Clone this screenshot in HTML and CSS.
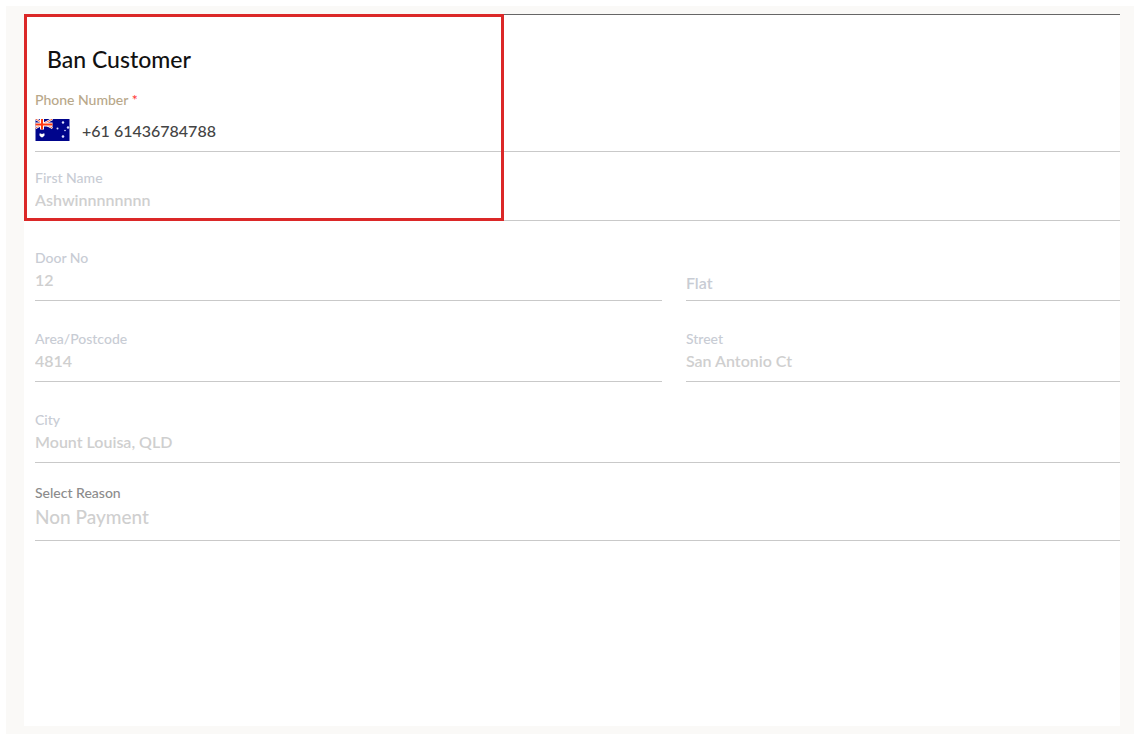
FILE: index.html
```
<!DOCTYPE html>
<html lang="en">
<head>
  <meta charset="UTF-8">
  <title>Ban Customer</title>
  <meta name="viewport" content="width=device-width, initial-scale=1.0">
  <link rel="stylesheet" href="styles.css">
</head>
<body>
  <main class="page">
    <form class="card">
      <section class="customer">
        <h1>Ban Customer</h1>

        <div class="field phone">
          <label for="phone">Phone Number <span class="required">*</span></label>
          <div class="phone-row">
            <svg class="flag" viewBox="0 0 34 22" aria-hidden="true">
              <rect width="34" height="22" fill="#00058c"/>
              <path d="M0 0L17 9M17 0L0 9" stroke="#fff" stroke-width="2.4"/>
              <path d="M0 0L17 9M17 0L0 9" stroke="#f0441e" stroke-width="0.8"/>
              <path d="M6.5 0V10.500M0 5.5H17" stroke="#fff" stroke-width="4"/>
              <path d="M6.5 0V10.500M0 5.5H17" stroke="#ff3a12" stroke-width="2"/>
              <path d="M4 14.500h1.500l1 .7 1-.7H9v2l-1.500 1.500-1 .5-1-.5L4 16.500z" fill="#fff"/>
              <g fill="#dfe4ff">
                <circle cx="27.500" cy="3.500" r="1.200"/>
                <circle cx="22" cy="9.500" r="1"/>
                <circle cx="32.500" cy="8.500" r="1.200"/>
                <circle cx="29.500" cy="11.500" r="0.800"/>
                <circle cx="27.500" cy="17.500" r="1.300"/>
              </g>
            </svg>
            <input type="tel" id="phone" value="+61 61436784788">
          </div>
        </div>

        <div class="field">
          <label for="first-name">First Name</label>
          <input type="text" id="first-name" value="Ashwinnnnnnnn" disabled>
        </div>

        <div class="highlight"></div>
      </section>

      <section class="address">
        <div class="field">
          <label for="door">Door No</label>
          <input type="text" id="door" value="12" disabled>
        </div>
        <div class="field empty">
          <input type="text" id="flat" placeholder="Flat" aria-label="Flat" disabled>
        </div>
        <div class="field">
          <label for="area">Area/Postcode</label>
          <input type="text" id="area" value="4814" disabled>
        </div>
        <div class="field">
          <label for="street">Street</label>
          <input type="text" id="street" value="San Antonio Ct" disabled>
        </div>
        <div class="field wide">
          <label for="city">City</label>
          <input type="text" id="city" value="Mount Louisa, QLD" disabled>
        </div>
      </section>

      <div class="field reason">
        <label for="reason">Select Reason</label>
        <select id="reason" disabled>
          <option>Non Payment</option>
        </select>
      </div>
    </form>
  </main>
</body>
</html>
```
FILE: styles.css
```
* {
  box-sizing: border-box;
}

body {
  margin: 0;
  padding: 6px 6px 7px;
  min-height: 100vh;
  display: flex;
  background: #fff;
  font-family: Lato, sans-serif;
}

.page {
  flex: 1;
  display: flex;
  padding: 8px 14px 8px 18px;
  background: #faf9f7;
}

.card {
  flex: 1;
  background: #fff;
  border-top: 1px solid #666;
}

.customer {
  position: relative;
  padding-left: 11px;
}

h1 {
  margin: 0;
  padding: 28px 12px 16px;
  font-size: 23px;
  line-height: 32px;
  font-weight: 500;
  color: #111;
}

.field {
  display: flex;
  flex-direction: column;
  padding-bottom: 9px;
  border-bottom: 1px solid #c9c9c9;
}

.field label {
  font-size: 14px;
  line-height: 18px;
  font-weight: 500;
  color: #c8ccd4;
}

.field input,
.field select {
  width: 100%;
  height: 24px;
  margin: 0;
  padding: 0;
  border: none;
  outline: none;
  background: none;
  font-family: inherit;
  font-size: 16px;
  font-weight: 600;
  color: #cfcfcf;
  opacity: 1;
}

.field input::placeholder {
  color: #c8ccd4;
  opacity: 1;
}

.phone {
  margin-bottom: 17px;
}

.field.phone label {
  color: #b8a88a;
}

.field.phone .required {
  color: #f33;
}

.phone-row {
  display: flex;
  align-items: center;
  gap: 12px;
  padding-top: 9px;
}

.field.phone input {
  font-weight: 500;
  color: #444;
}

.flag {
  flex: none;
  width: 35px;
  height: 22px;
}

/* red frame around the customer details */
.highlight {
  position: absolute;
  top: -1px;
  left: 0;
  bottom: 0;
  width: 480px;
  max-width: 100%;
  border: 3px solid #db2828;
  pointer-events: none;
}

.address {
  display: grid;
  grid-template-columns: 13fr 9fr;
  gap: 29px 24px;
  padding: 28px 0 21px 11px;
}

.empty {
  justify-content: flex-end;
  padding-bottom: 6px;
}

.wide {
  grid-column: 1 / -1;
}

.reason {
  margin-left: 11px;
}

.field.reason label {
  color: #8c8c8c;
}

.field select {
  appearance: none;
  height: 29px;
  font-size: 19px;
  font-weight: 500;
}
```
